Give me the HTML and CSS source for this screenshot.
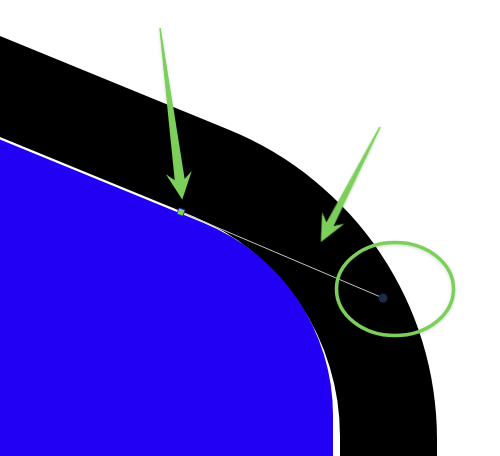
FILE: index.html
```html
<!DOCTYPE html>
<html lang="en">
<head>
<meta charset="utf-8">
<title>Corner offset</title>
<link rel="stylesheet" href="styles.css">
</head>
<body>
<main class="canvas">
  <svg class="drawing" width="500" height="456" viewBox="0 0 500 456" xmlns="http://www.w3.org/2000/svg">
    <defs>
      <filter id="soft" x="-20%" y="-20%" width="140%" height="140%">
        <feDropShadow dx="0" dy="1" stdDeviation="1.5" flood-color="#000" flood-opacity="0.18"/>
      </filter>
    </defs>
    <path class="band" d="M -20 27.8 L 229.5 130.1 A 334.2 334.2 0 0 1 437 439.4 L 437 470 L 340 470 L 340 436 A 238 238 0 0 0 192 215.7 L -20 128.8 Z"/>
    <path class="fill" d="M -20 131.2 L 203.8 223 A 208 208 0 0 1 333 415.4 L 333 470 L -20 470 Z"/>
    <line class="handle" x1="181" y1="212" x2="383" y2="298"/>
    <circle class="knob" cx="383" cy="298" r="4.5"/>
    <rect class="anchor" x="177.8" y="208.8" width="6.4" height="6.4" transform="rotate(20 181 212)"/>
    <ellipse class="ring" cx="395" cy="289" rx="58.5" ry="46.5" filter="url(#soft)"/>
    <g filter="url(#soft)">
      <polygon class="arrow" transform="translate(160 28) rotate(82.6)" points="0,-0.7 152.9,-5 145.9,-13 172.9,0 145.9,13 152.9,5 0,0.7"/>
      <polygon class="arrow" transform="translate(380 127) rotate(117.2)" points="0,-0.7 109.3,-4 102.3,-12.5 129.3,0 102.3,12.5 109.3,4 0,0.7"/>
    </g>
  </svg>
</main>
</body>
</html>
```
FILE: styles.css
```css
html, body {
  margin: 0;
  padding: 0;
  background: #ffffff;
  font-family: "Liberation Sans", Arial, sans-serif;
}

.canvas {
  width: 500px;
  height: 456px;
  overflow: hidden;
}

.drawing {
  display: block;
}

.band {
  fill: #000000;
}

.fill {
  fill: #2200f4;
}

.handle {
  stroke: #c4c4c4;
  stroke-width: 1;
}

.knob {
  fill: #1d2b4b;
}

.anchor {
  fill: #7ed657;
  stroke: #2a1cc8;
  stroke-width: 0.8;
}

.ring {
  fill: none;
  stroke: #7dcf5b;
  stroke-width: 3.5;
}

.arrow {
  fill: #7dcf5b;
}
```
